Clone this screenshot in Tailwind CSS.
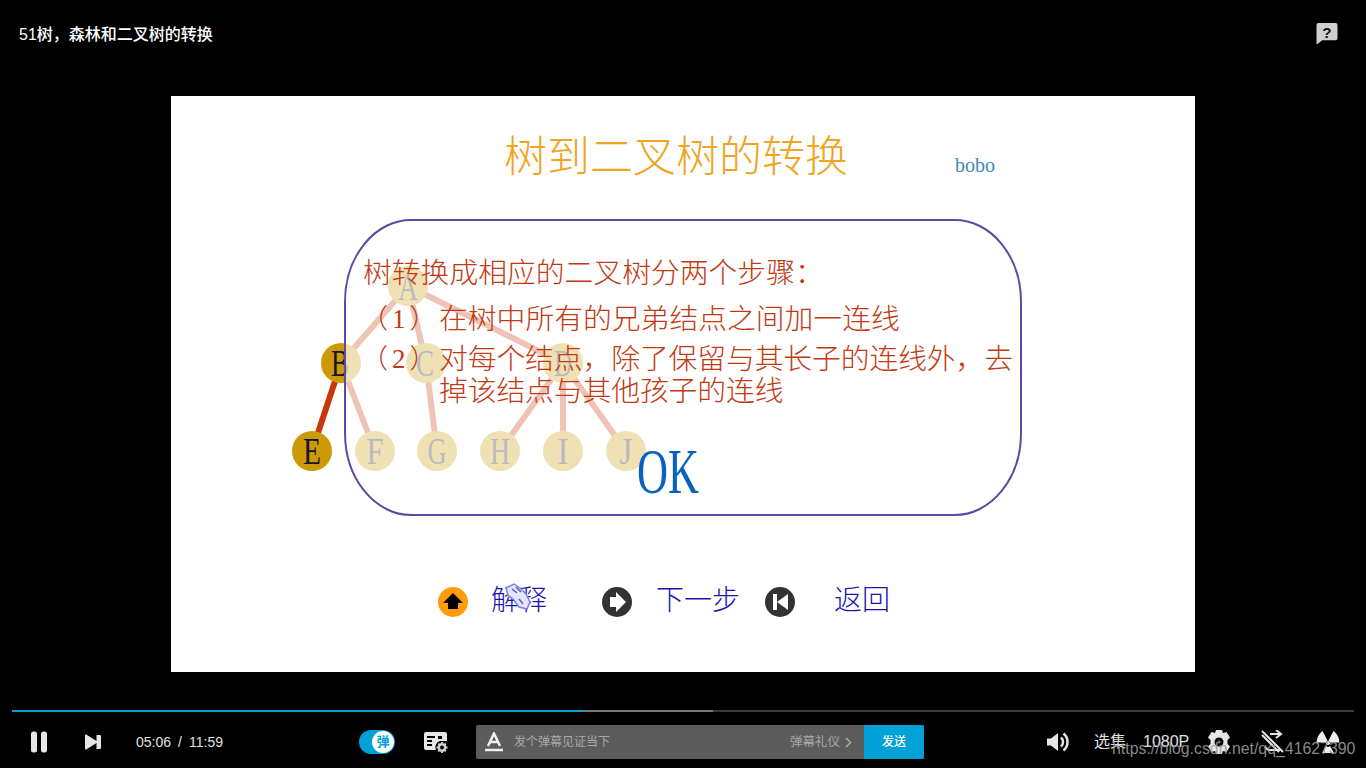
<!DOCTYPE html>
<html lang="zh-CN">
<head>
    <meta charset="UTF-8">
    <meta name="viewport" content="width=device-width, initial-scale=1.0">
    <title>51树，森林和二叉树的转换</title>
    <script src="https://cdn.jsdelivr.net/npm/@tailwindcss/browser@4"></script>
</head>
<body class="bg-black w-[1366px] h-[768px] overflow-hidden relative font-[family-name:'Liberation_Sans','Noto_Sans_CJK_SC',sans-serif]">

    <!-- top bar -->
    <header class="h-[96px] flex items-start justify-between pl-[19px] pr-[28px] pt-[23px]">
        <h1 class="text-[16px] leading-[23px] font-medium text-white">51树，森林和二叉树的转换</h1>
        <svg class="w-[22px] h-[21px]" viewBox="0 0 22 22">
            <path fill="#cfcfcf" d="M2 0h18a2 2 0 0 1 2 2v14a2 2 0 0 1-2 2H6l-5 4H0V2a2 2 0 0 1 2-2z"/>
            <text x="11" y="15.500" text-anchor="middle" font-size="16" font-weight="700" fill="#111">?</text>
        </svg>
    </header>

    <!-- slide: free canvas, x/y measured from the slide's corner -->
    <main class="relative ml-[171px] w-[1024px] h-[576px] bg-white overflow-hidden text-[#c23a12] font-[family-name:'Liberation_Serif','Noto_Sans_CJK_SC',serif]">
        <h2 class="absolute left-[333px] top-[33px] text-[43px] leading-[58px] font-light text-[#f0a41f] whitespace-nowrap">树到二叉树的转换</h2>
        <span class="absolute left-[784px] top-[57px] text-[20px] leading-[24px] text-[#3f88b6]">bobo</span>

        <svg class="absolute left-0 top-0" width="1024" height="576" viewBox="171 96 1024 576">
            <g stroke="#c8380a" stroke-width="6">
                <line x1="408" y1="286" x2="341" y2="363"/>
                <line x1="408" y1="286" x2="426" y2="363"/>
                <line x1="408" y1="286" x2="563" y2="363"/>
                <line x1="341" y1="363" x2="312" y2="451"/>
                <line x1="341" y1="363" x2="375" y2="451"/>
                <line x1="426" y1="363" x2="437" y2="451"/>
                <line x1="563" y1="363" x2="500" y2="451"/>
                <line x1="563" y1="363" x2="563" y2="451"/>
                <line x1="563" y1="363" x2="626" y2="451"/>
            </g>
            <g fill="#cc9a06">
                <circle cx="408" cy="286" r="20"/>
                <circle cx="341" cy="363" r="20"/>
                <circle cx="426" cy="363" r="20"/>
                <circle cx="563" cy="363" r="20"/>
                <circle cx="312" cy="451" r="20"/>
                <circle cx="375" cy="451" r="20"/>
                <circle cx="437" cy="451" r="20"/>
                <circle cx="500" cy="451" r="20"/>
                <circle cx="563" cy="451" r="20"/>
                <circle cx="626" cy="451" r="20"/>
            </g>
            <g fill="#14142a" font-size="37" text-anchor="middle">
                <text x="408" y="300" textLength="20" lengthAdjust="spacingAndGlyphs">A</text>
                <text x="340" y="376" textLength="18" lengthAdjust="spacingAndGlyphs">B</text>
                <text x="425" y="376" textLength="18" lengthAdjust="spacingAndGlyphs">C</text>
                <text x="563" y="376" textLength="18" lengthAdjust="spacingAndGlyphs">D</text>
                <text x="312" y="464" textLength="18" lengthAdjust="spacingAndGlyphs">E</text>
                <text x="375" y="464" textLength="17" lengthAdjust="spacingAndGlyphs">F</text>
                <text x="437" y="464" textLength="19" lengthAdjust="spacingAndGlyphs">G</text>
                <text x="500" y="464" textLength="20" lengthAdjust="spacingAndGlyphs">H</text>
                <text x="563" y="464" textLength="11" lengthAdjust="spacingAndGlyphs">I</text>
                <text x="626" y="464" textLength="13" lengthAdjust="spacingAndGlyphs">J</text>
            </g>
            <!-- the rounded box veils what is under it -->
            <rect x="345" y="220" width="676" height="295" rx="66" ry="82" fill="#fff" fill-opacity="0.7" stroke="#5a4ca6" stroke-width="2"/>
            <text x="637" y="493" font-size="64" fill="#0a62c0" textLength="62" lengthAdjust="spacingAndGlyphs">OK</text>
        </svg>

        <div class="absolute left-[192px] top-[157px] w-[660px] text-[28.800px] leading-[40px] font-light">
            <p class="whitespace-nowrap">树转换成相应的二叉树分两个步骤：</p>
            <p class="whitespace-nowrap pt-[6px] -ml-[2px] flex"><span class="w-[78px] shrink-0 tracking-[4px] text-[27px] leading-[40px] [text-spacing-trim:space-all]">（1）</span><span>在树中所有的兄弟结点之间加一连线</span></p>
            <p class="-ml-[2px] flex"><span class="w-[78px] shrink-0 tracking-[4px] text-[27px] [text-spacing-trim:space-all]">（2）</span><span class="leading-[32px] pt-[4px] tracking-[-0.1px]">对每个结点，除了保留与其长子的连线外，去<br>掉该结点与其他孩子的连线</span></p>
        </div>

        <!-- nav buttons -->
        <div class="absolute left-[267px] top-[487px] h-[36px] flex items-center text-[#1c14b0] text-[28px] font-light whitespace-nowrap">
            <svg class="w-[30px] h-[30px] mt-[2px]" viewBox="0 0 30 30"><circle cx="15" cy="15" r="15" fill="#ff9c0a"/><path fill="#000" d="M15 6l10 10h-5v6H10v-6H5z"/></svg>
            <span class="ml-[23px] relative">解释
                <svg class="absolute left-[13px] top-[3px] w-[28px] h-[28px] blur-[0.5px]" viewBox="0 0 28 28"><path fill="#e6e6fa" stroke="#7f7fe0" stroke-width="1.500" d="M2 5l8-4 6 4 6 6 4 8-3 7-8-2-5-7-6-5z"/><path stroke="#5a5ad0" stroke-width="1.500" d="M8 6l5 4M12 4l5 5M15 16l4 5"/></svg>
            </span>
            <svg class="w-[30px] h-[30px] ml-[55px] mt-[2px]" viewBox="0 0 30 30"><circle cx="15" cy="15" r="15" fill="#333"/><path fill="#fff" d="M8 10h6V5l10 10-10 10v-5H8z"/></svg>
            <span class="ml-[24px]">下一步</span>
            <svg class="w-[30px] h-[30px] ml-[25px] mt-[2px]" viewBox="0 0 30 30"><circle cx="15" cy="15" r="15" fill="#333"/><path fill="#fff" d="M8 7h4v16H8zM23 7v16L12 15z"/></svg>
            <span class="ml-[39px]">返回</span>
        </div>
    </main>

    <!-- progress -->
    <div class="mt-[38px] mx-[12px] h-[2px] flex bg-[#3a3a3a]">
        <div class="w-[572px] bg-[#00a1d6]"></div>
        <div class="w-[129px] bg-[#7a7a7a]"></div>
    </div>

    <!-- controls -->
    <footer class="mt-[13px] h-[34px] flex items-center text-[#e0e0e0] whitespace-nowrap">
        <svg class="ml-[31px] w-[16px] h-[22px]" viewBox="0 0 16 22" fill="#e6e6e6"><rect width="6" height="21" y="0.500" rx="2.500"/><rect x="10" width="6" height="21" y="0.500" rx="2.500"/></svg>
        <svg class="ml-[38px] w-[16px] h-[16px]" viewBox="0 0 16 16" fill="#e6e6e6"><path d="M0 1.500a1 1 0 0 1 1.600-.8L11.500 7V1h3.500a1 1 0 0 1 1 1v12a1 1 0 0 1-1 1h-3.500V9L1.600 15.300a1 1 0 0 1-1.600-.8z"/></svg>
        <span class="ml-[35px] text-[14px] w-[87px] flex justify-between"><span>05:06</span><span>/</span><span>11:59</span></span>

        <div class="ml-[136px] w-[36px] h-[24px] rounded-full bg-[#00a1d6] flex items-center justify-end pr-[1px]">
            <span class="w-[22px] h-[22px] rounded-full bg-white text-[#00a1d6] text-[13px] font-bold leading-[22px] text-center">弹</span>
        </div>
        <svg class="ml-[29px] w-[24px] h-[22px]" viewBox="0 0 24 22">
            <path fill="#e6e6e6" d="M2 1h19a2 2 0 0 1 2 2v7h-7a6.500 6.500 0 0 0-4 9H2a2 2 0 0 1-2-2V3a2 2 0 0 1 2-2z"/>
            <path stroke="#000" stroke-width="2" d="M3 6h8M3 10h5M3 14h5"/>
            <rect x="14" y="5" width="4" height="3" fill="#000"/>
            <circle cx="18" cy="16.500" r="3.200" fill="none" stroke="#cfcfcf" stroke-width="2.500"/>
            <path stroke="#cfcfcf" stroke-width="1.800" d="M18 11v2M18 20v2M12.500 16.500h2M21.500 16.500h2M14.200 12.700l1.300 1.300M20.500 19l1.300 1.300M14.200 20.300l1.300-1.300M20.500 14l1.300-1.300"/>
        </svg>

        <div class="ml-[28px] w-[448px] h-[34px] rounded-[2px] overflow-hidden bg-[#5c5c5c] flex items-center text-[12px] text-[#a8a8a8]">
            <svg class="ml-[9px] w-[18px] h-[20px]" viewBox="0 0 18 20" fill="none" stroke="#f0f0f0" stroke-width="2.500"><path d="M3 14L9 1.500 15 14M5 10h8"/><path d="M0 18h18"/></svg>
            <span class="ml-[11px]">发个弹幕见证当下</span>
            <span class="ml-auto text-[12.500px]">弹幕礼仪</span>
            <svg class="ml-[5px] w-[7px] h-[11px]" viewBox="0 0 7 11" fill="none" stroke="#a8a8a8" stroke-width="1.500"><path d="M1 1l4.500 4.500L1 10"/></svg>
            <span class="ml-[12px] w-[60px] h-full bg-[#00a1d6] text-white font-medium leading-[34px] text-center">发送</span>
        </div>

        <svg class="ml-[123px] w-[22px] h-[20px]" viewBox="0 0 22 20" fill="#e6e6e6"><path d="M0 6.500h4L11 1v18l-7-5.500H0z"/><path fill="none" stroke="#e6e6e6" stroke-width="2.500" d="M14 5.500a6 6 0 0 1 0 9M16.500 1.500a11 11 0 0 1 0 17"/></svg>
        <span class="ml-[25px] text-[16px] w-[34px]">选集</span>
        <span class="ml-[15px] text-[16px] w-[46px]">1080P</span>
        <svg class="ml-[18px] w-[24px] h-[24px]" viewBox="0 0 24 24" fill="#e6e6e6"><path d="M9 0h6l1 3 3.500-1L23 7.500 20.500 10v4l2.500 2.500L19.500 22 16 21l-1 3H9l-1-3-3.500 1L1 16.500 3.500 14v-4L1 7.500 4.500 2 8 3z"/><circle cx="12" cy="12" r="4.500" fill="#000"/><circle cx="12" cy="12" r="1.500" fill="#777"/></svg>
        <svg class="ml-[30px] w-[24px] h-[24px]" viewBox="0 0 24 24" fill="none" stroke="#e6e6e6" stroke-width="2"><path d="M1 1l21 21M1 5l17 17"/><path d="M9 4h11M15 0l5 4-5 4M19 20H7M4 17l3 3"/></svg>
        <svg class="ml-[31px] w-[24px] h-[24px]" viewBox="0 0 24 24" fill="#eeeeee"><circle cx="12" cy="13" r="2"/><path d="M6.500 1L11.500 10.500a3 3 0 0 0-1.500 2H0.500Q1 5 6.500 1zM17.500 1L12.500 10.500a3 3 0 0 1 1.500 2h9.500Q23 5 17.500 1zM10 16a3 3 0 0 0 4 0l4 7H6z"/></svg>
    </footer>

    <!-- csdn watermark burned into the capture -->
    <span class="absolute left-[1112px] top-[738px] text-[15.870px] leading-[22px] text-[#9a9a9a]/90 whitespace-nowrap">https://blog.csdn.net/qq_41627390</span>
</body>
</html>
